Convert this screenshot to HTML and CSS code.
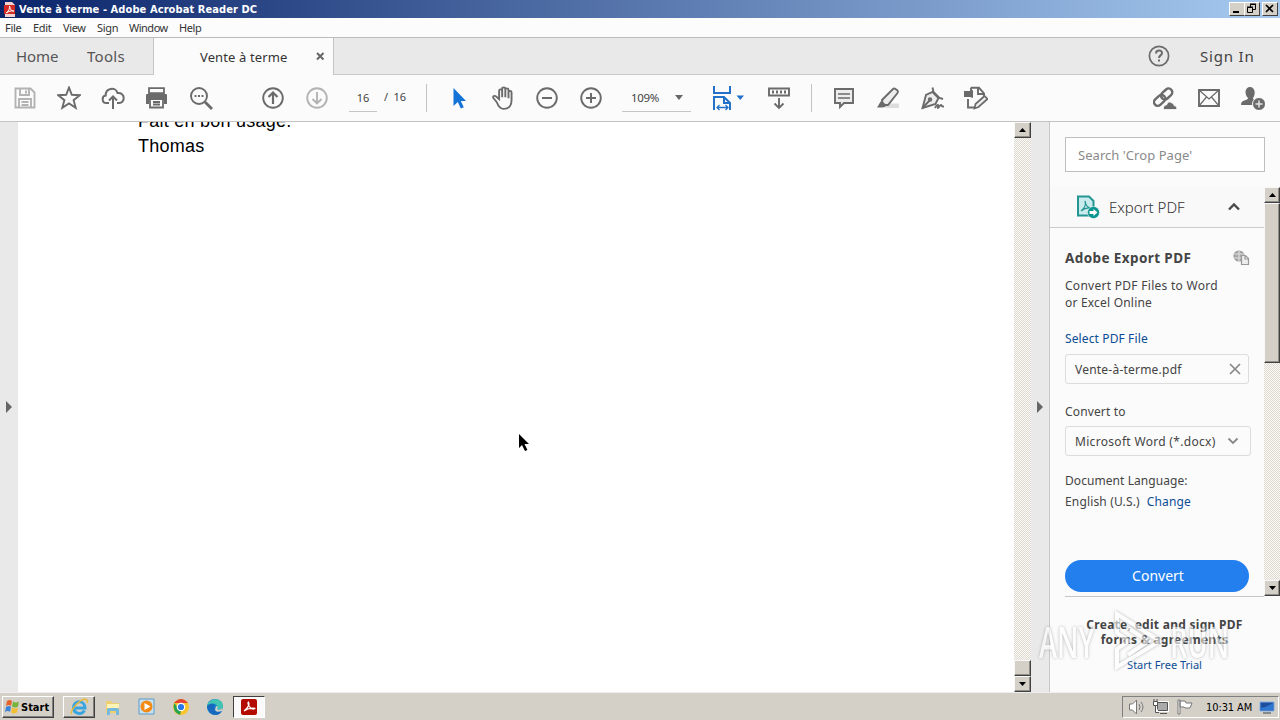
FILE: index.html
```html
<!DOCTYPE html>
<html lang="en">
<head>
<meta charset="utf-8">
<title>Vente à terme - Adobe Acrobat Reader DC</title>
<link rel="stylesheet" href="styles.css">
</head>
<body>
<div class="app">
  <header class="titlebar">
    <svg class="app-icon" width="12" height="15" viewBox="0 0 12 15"><path d="M1 0h7l3 3v12H1z" fill="#f5d3d0"/><path d="M0 3h11v9H0z" fill="#d32b24"/><path d="M2 11c3-2 4-5 3.500-7c1 4 2 5 4.500 5c-3-.5-5 .2-8 2z" fill="none" stroke="#fff"/></svg>
    <span class="title-text">Vente à terme - Adobe Acrobat Reader DC</span>
    <div class="win-buttons">
      <i class="win-btn"><svg width="16" height="13"><path d="M4 9h6v2H4z"/></svg></i>
      <i class="win-btn"><svg width="16" height="13" fill="none" stroke="#000"><path d="M6.500 5V2.500h5v5H9M6 2h6M3.500 5.500h5v5h-5zM3 5h6"/></svg></i>
      <i class="win-btn close"><svg width="16" height="13"><path d="M4 3l7 7M11 3l-7 7" stroke="#000" stroke-width="1.700"/></svg></i>
    </div>
  </header>
  <nav class="menubar"><span class="m1">File</span><span class="m2">Edit</span><span class="m3">View</span><span class="m4">Sign</span><span class="m5">Window</span><span class="m6">Help</span></nav>
  <div class="tabs">
    <div class="tab-left"><span class="home">Home</span><span class="tools">Tools</span></div>
    <div class="tab-active"><span class="doc-name">Vente à terme</span><svg width="9" height="9"><path d="M1 1l6.500 6.500M7.500 1L1 7.500" stroke="#666" stroke-width="2"/></svg></div>
    <div class="tab-right">
      <svg width="22" height="22" viewBox="0 0 22 22" fill="none" stroke="#6b6b6b" stroke-width="1.700"><circle cx="11" cy="11" r="9.600"/><path d="M8 8.500c0-4 6-4 6-.5c0 2.500-3 2.300-3 5M11 14.500v2" stroke-width="2"/></svg>
      <span class="signin">Sign In</span>
    </div>
  </div>
  <div class="toolbar">
    <div class="group g-file">
      <svg class="ic pale" viewBox="0 0 24 24"><path d="M2.500 2.500h15l4 4v15h-19zM7 3v6h9V3M13 4.500v3M6 21v-8h12v8M8.500 16h7M8.500 19h7"/></svg>
      <svg class="ic" viewBox="0 0 24 24"><path d="M12 1.500l2.800 7.300 8 .4-6.200 5 2.100 7.600-6.700-4.300-6.700 4.300 2.100-7.600-6.200-5 8-.4z"/></svg>
      <svg class="ic" viewBox="0 0 24 24"><path d="M8 17H5.500c-5 0-5-7-.8-7.500C4.500 1.500 15 .8 16.500 7c8-1 8 10 1.500 10h-2M12 23V11M8 14.500l4-4 4 4" stroke-width="2"/></svg>
      <svg class="ic solid" viewBox="0 0 24 24"><path d="M4 2.200h15v5H4z" class="hollow"/><path d="M2 8h19q1 0 1 1v9h-3v-4H4v4H1V9q0-1 1-1z"/><path d="M5 13h13v8.500H5z" class="hollow"/><path d="M8 16h7M8 18.500h7" stroke="#6b6b6b"/></svg>
      <svg class="ic" viewBox="0 0 24 24"><circle cx="10" cy="10" r="8"/><path d="M16 16l7 7" stroke-width="2.800"/><path d="M5.500 10h2M9 10h2M12.500 10h2" stroke-width="2"/></svg>
    </div>
    <div class="group g-nav">
      <svg class="ic" viewBox="0 0 24 24"><circle cx="12" cy="12" r="9.800"/><path d="M12 18V7M7.500 11L12 6.500l4.500 4.500" stroke-width="2.200"/></svg>
      <svg class="ic pale" viewBox="0 0 24 24"><circle cx="12" cy="12" r="9.800"/><path d="M12 6v11M7.500 13l4.500 4.500 4.500-4.500"/></svg>
    </div>
    <div class="page-now">16</div><div class="page-all">/&nbsp; 16</div>
    <i class="rule"></i>
    <div class="group g-view">
      <svg class="ic" viewBox="0 0 24 24"><path d="M6.500 2v18l4.300-4 3 6.500 3-1.300-3-6.200H19z" fill="#1473d6" stroke="none"/></svg>
      <svg class="ic" viewBox="0 0 24 24"><path d="M5 16l-3-4c-1-2 1-3 2.500-1.500L7 13V5c0-2 2.700-2 2.700 0v6V3c0-2 2.800-2 2.800 0v8V4c0-2 2.800-2 2.800 0v8V6.500c0-2 2.700-2 2.700 0V14c0 5-2 8.500-7 8.500-3 0-4.500-2-6-6.500" transform="translate(.2 -.2) scale(1.130 1.030)" stroke-width="1.700"/></svg>
      <svg class="ic" viewBox="0 0 24 24"><circle cx="12" cy="12" r="9.800"/><path d="M7 12h10" stroke-width="2"/></svg>
      <svg class="ic" viewBox="0 0 24 24"><circle cx="12" cy="12" r="9.800"/><path d="M7 12h10M12 7v10" stroke-width="2"/></svg>
    </div>
    <div class="zoom-box"><span>109%</span><svg width="8" height="5"><path d="M0 0h8L4 5z" fill="#666"/></svg></div>
    <svg class="fit" width="32" height="26" viewBox="0 0 32 26" fill="none" stroke="#2471c8" stroke-width="2"><path d="M2 1v7h16V1M2 25V12h10l6 6v7M12 12v6h6"/><path d="M5 22.500h11M7.500 20L5 22.500 7.500 25M13.500 20l2.500 2.500-2.500 2.500" stroke-width="1.300"/><path d="M24.500 10.500h7.500l-3.700 4.500z" fill="#2471c8" stroke="none"/></svg>
    <svg class="ic scroll-ic" viewBox="0 0 24 24"><path d="M2 2.500h20v7H2z"/><path d="M5 6h14" stroke-width="3" stroke-dasharray="2 2"/><path d="M12 12v10M7.500 17.500L12 22l4.500-4.500"/></svg>
    <i class="rule rule-2"></i>
    <div class="group g-mark">
      <svg class="ic" viewBox="0 0 24 24"><path d="M3 3h18v14h-9l-4 4v-4H3z" fill="#ededed"/><path d="M6 8h12M6 12h12" stroke-width="1.300"/></svg>
      <svg class="ic" viewBox="0 0 24 24"><path d="M12 17.500h11V22H9z" fill="#ddd" stroke="none"/><path d="M6 14L16.500 3.500q1.500-1.500 3-.5l2 1.500q1 1 0 2.500L12 19H7z" fill="#ededed"/><path d="M5 15l6 4-2 2-3 .5H1z" fill="#6b6b6b" stroke="none"/></svg>
      <svg class="ic" viewBox="0 0 24 24"><path d="M12.500 6l6 6-3 6L2.500 22l3.500-13z" fill="#ededed"/><path d="M12.500 1.500l1 4.500 6 6 3.500 1M2.500 22l7.500-8"/><circle cx="10" cy="13.500" r="1.300"/><path d="M15 22c2-4 4-4 3-1s2-2 3-2 0 2 3 1.500"/></svg>
      <svg class="ic" viewBox="0 0 24 24"><path d="M7 1.800h8l5 5.500M14 2v6h6M4 13v8.500h6M7 1.500v4M20 7v3"/><path d="M0 5h6l3-1v8l-3-1H0z" fill="#6b6b6b" stroke="none"/><path d="M10.500 22.500l1-4.500 9-8 3 3-9 8z" fill="#ededed" stroke-width="1.700"/></svg>
    </div>
    <div class="group g-share">
      <svg class="ic" viewBox="0 0 24 24"><g transform="rotate(-42 10 11)"><rect x="-1" y="7.500" width="12.500" height="7.500" rx="3.700" stroke-width="2.400"/><rect x="8.500" y="7.500" width="12.500" height="7.500" rx="3.700" stroke-width="2.400"/></g><path d="M10.500 23.500q-.5-4.500 3-4.500 1.500-5 5.500-2 2 0 2 2.500 3 0 3 4z" fill="#6b6b6b" stroke="#fbfbfb" stroke-width=".8"/></svg>
      <svg class="ic" viewBox="0 0 24 24"><path d="M2 4h20v16H2z"/><path d="M2 4l10 9L22 4M2 20l7.500-9M22 20l-7.500-9" stroke-width="1.200"/></svg>
      <svg class="ic" viewBox="0 0 24 24"><path d="M0 19c0-6 7-4 7-7-4-4-3-11 2-11s6 7 3 11c0 2 2 2 4 3v4z" fill="#6b6b6b" stroke="none"/><circle cx="18" cy="18" r="6.500" fill="#6b6b6b" stroke="#fbfbfb" stroke-width="1"/><path d="M14.500 18h7M18 14.500v7" stroke="#e6e6e6" stroke-width="1.500"/></svg>
    </div>
  </div>

  <main class="workspace">
    <aside class="strip"><svg width="6" height="12"><path d="M0 0l6 6-6 6z" fill="#666"/></svg></aside>
    <section class="page">
      <p class="line cut">Fait en bon usage.</p>
      <p class="line">Thomas</p>
      <svg class="cursor" width="10" height="17" viewBox="0 0 10 17"><path d="M0 0v14l3-3 3 6 2.500-1-3-6H10z"/></svg>
    </section>
    <div class="scrollbar doc-scroll">
      <i class="sb-btn"><svg width="7" height="4"><path d="M0 4h7L3.500 0z"/></svg></i>
      <i class="sb-track"></i>
      <i class="sb-btn"></i>
      <i class="sb-btn"><svg width="7" height="4"><path d="M0 0h7L3.500 4z"/></svg></i>
    </div>
    <aside class="strip strip-r"><svg width="6" height="12"><path d="M0 0l6 6-6 6z" fill="#666"/></svg></aside>
    <aside class="panel">
      <div class="search"><span>Search 'Crop Page'</span></div>
      <div class="panel-scroll">
        <div class="panel-body">
          <div class="section-head">
            <svg width="24" height="24" viewBox="0 0 24 24"><path d="M2 1.500h11l4.500 4.500v14.500H2z" fill="#c9ebed" stroke="#259591" stroke-width="2"/><path d="M5 16c4-3 5-7 4-10 1 5 3 7 6 7-3-.5-7 .5-10 3z" fill="none" stroke="#259591" stroke-width="1.200"/><circle cx="17.500" cy="17.500" r="6" fill="#0c9490" stroke="#fff" stroke-width=".5"/><path d="M13.500 16h4v-2l4 3.500-4 3.500v-2h-4z" fill="#fff"/></svg>
            <span class="section-title">Export PDF</span>
            <svg class="chev" width="14" height="9"><path d="M2 7.500l5-5 5 5" fill="none" stroke="#4b4b4b" stroke-width="2.400"/></svg>
          </div>
          <div class="export">
            <div class="row head"><strong>Adobe Export PDF</strong><svg width="17" height="16" viewBox="0 0 17 16" fill="#eee" stroke="#999" stroke-width="1.200"><circle cx="6" cy="6" r="5" fill="#aaa"/><path d="M1 4h10M1 8h10M6 1v10" stroke="#ddd"/><path d="M8.500 5.500h4l3 3v6h-7zM12 6v3h3"/></svg></div>
            <p class="desc"><span class="d1">Convert PDF Files to Word</span><br><span class="d2">or Excel Online</span></p>
            <a class="link select">Select PDF File</a>
            <div class="field file"><span>Vente-à-terme.pdf</span><svg width="12" height="12"><path d="M1 1l10 10M11 1L1 11" stroke="#888" stroke-width="1.700"/></svg></div>
            <label class="conv-label">Convert to</label>
            <div class="field combo"><span>Microsoft Word (*.docx)</span><svg width="12" height="8"><path d="M1.500 1.500L6 6l4.500-4.500" fill="none" stroke="#888" stroke-width="1.800"/></svg></div>
            <p class="lang">Document Language:</p>
            <p class="lang2"><span>English (U.S.)</span><a class="link change">Change</a></p>
            <button class="convert"><span>Convert</span></button>
          </div>
        </div>
        <div class="scrollbar panel-sb">
          <i class="sb-btn"><svg width="7" height="4"><path d="M0 4h7L3.500 0z"/></svg></i>
          <i class="sb-btn thumb"></i>
          <i class="sb-track"></i>
          <i class="sb-btn"><svg width="7" height="4"><path d="M0 0h7L3.500 4z"/></svg></i>
        </div>
      </div>
      <div class="promo"><strong><span class="p1">Create, edit and sign PDF</span><br><span class="p2">forms &amp; agreements</span></strong><a class="link trial">Start Free Trial</a></div>
    </aside>
  </main>

  <footer class="taskbar">
    <div class="start"><svg width="16" height="16" viewBox="0 0 16 16"><path d="M2 2q3-2 5 0L6 7Q4 5 1 7z" fill="#e8622b"/><path d="M8 2.500q3 2 6 0l-1 5q-3 2-6 0z" fill="#78b43b"/><path d="M1 8q3-2 5 0l-1 5q-2-2-5 0z" fill="#3c86d8"/><path d="M7 8.500q3 2 6 0l-1 5q-3 2-6 0z" fill="#f5bf35"/></svg><b>Start</b></div>
    <div class="task ie"><svg width="20" height="20" viewBox="0 0 20 20" fill="none"><path d="M15.500 13.500C12 19 4 16 4.500 10 5 3 16 3 16 11H6" stroke="#39a5e0" stroke-width="3"/><path d="M3 17C-1 15 13-1 18 3q1 1 0 3" stroke="#e8b93a" stroke-width="1.400"/></svg></div>
    <div class="task"><svg width="18" height="18" viewBox="0 0 18 18"><path d="M2 3h5l1 2h7v10H2z" fill="#edcf70"/><path d="M3 6h12v4H3z" fill="#fff3b5"/><path d="M3 17v-5q0-2 2-2h8q2 0 2 2v5h-3v-4H6v4z" fill="#75b9dc"/></svg></div>
    <div class="task"><svg width="18" height="18" viewBox="0 0 18 18"><path d="M1 1h15v15H1z" fill="#c8e1f3" stroke="#5b9bc6"/><circle cx="8.500" cy="8.500" r="6" fill="#f28a14"/><path d="M6.500 5l6 3.500-6 3.500z" fill="#fff"/></svg></div>
    <div class="task"><svg width="18" height="18" viewBox="0 0 18 18"><circle cx="9" cy="9" r="8" fill="#f9c52c"/><path d="M2 5l7 8-1 4q-8-3-6-12z" fill="#2ba24c"/><path d="M2 5q7-8 14 0H9z" fill="#e64434"/><circle cx="9" cy="9" r="3.700" fill="#2877e6" stroke="#fff" stroke-width="1.200"/></svg></div>
    <div class="task"><svg width="18" height="18" viewBox="0 0 18 18"><circle cx="9" cy="9" r="8" fill="#167fd0"/><path d="M1 8C3-1 17-1 17 8c0 4-5 4-6 3 2-5-5-8-10-3z" fill="#43c4b2"/><path d="M1 8c4-4 8-2 8 1-2 4 3 6 7 4-4 7-14 4-15-5z" fill="#1769bd"/><path d="M10 8q3 1 1 3 2 2 6-1l-1 3q-6 2-7-1z" fill="#d4d0c8"/></svg></div>
    <div class="task acro"><svg width="16" height="16" viewBox="0 0 16 16"><rect width="16" height="16" rx="2" fill="#b30b00"/><path d="M3 12c4-3 6-7 4.500-9C6 4 9 11 13 10s-5-2-10 2z" fill="none" stroke="#fff" stroke-width="1.200"/></svg></div>
    <div class="tray">
      <svg width="18" height="16" viewBox="0 0 18 16" fill="#fff" stroke="#777"><path d="M1.500 5h3l4-4v14l-4-4h-3z"/><path d="M11 5q2 3 0 6M13 3q4 5 0 10" fill="none"/></svg>
      <svg width="18" height="16" viewBox="0 0 18 16" fill="#fff" stroke="#555"><path d="M5.500 3.500h10v8h-10z" fill="none" stroke="#fff" stroke-width="3"/><path d="M5.500 3.500h10v8h-10z" fill="#aaa"/><path d="M8 14.500h7M1.500 2.500h4v4h-4zM3.500 6.500v7H7M2 0v3M5 0v3"/></svg>
      <svg width="18" height="16" viewBox="0 0 18 16" fill="#fff" stroke="#777"><path d="M2 1h2v14H2zM4 2h5l1 2h6l-2 5H9L8 8H4z"/></svg>
      <time>10:31 AM</time>
      <svg class="desk" width="16" height="13"><path d="M1 1h14v9H1z" fill="#1d4d9c" stroke="#80b1ea"/><path d="M1 7q7-1 13-5v7H1z" fill="#2f78cf"/><path d="M4 12h8" stroke="#345"/></svg>
    </div>
  </footer>
  <div class="watermark"><span>ANY</span><svg width="58" height="62" viewBox="0 0 58 62"><path d="M10 4l43 27-43 26V39l12-8-12-8zM21 18l20 13-20 14" fill="none" stroke="#fff" stroke-width="4"/></svg><span class="w2">RUN</span></div>
</div>
</body>
</html>
```
FILE: styles.css
```css
* { box-sizing: border-box; }
body { margin: 0; background: #fff; color: #444; font-family: "Noto Sans", "Open Sans", sans-serif; }
p { margin: 0; }
svg { display: block; flex: none; }
span, strong, time, b { white-space: nowrap; }
.app { position: relative; display: flex; flex-direction: column; width: 1280px; height: 720px; overflow: hidden; }

.titlebar { display: flex; align-items: center; height: 18px; flex: none; padding: 0 2px 0 4px; background: linear-gradient(90deg, #0a246a, #a6caf0); }
.title-text { margin-left: 3px; color: #fff; font: bold 11px "DejaVu Sans Condensed", "DejaVu Sans", sans-serif; font-stretch: condensed; letter-spacing: .09px; }
.win-buttons { display: flex; margin-left: auto; }
.win-btn { display: block; width: 16px; height: 14px; background: #d4d0c8; border: 1px solid; border-color: #fff #404040 #404040 #fff; }
.win-btn svg { margin: -1px; }
.win-btn:first-child { margin-right: -1px; }
.close { margin-left: 2px; }

.menubar { display: flex; height: 20px; flex: none; padding-left: 5px; background: #fcfcfc; border-bottom: 1px solid #bcbcbc; font-size: 11px; line-height: 20px; color: #333; }
.m1 { width: 28px; letter-spacing: -.3px; } .m2 { width: 30px; letter-spacing: -.3px; } .m3 { width: 34px; letter-spacing: -.4px; } .m4 { width: 32px; letter-spacing: -.3px; } .m5 { width: 50px; letter-spacing: -.5px; } .m6 { letter-spacing: -.4px; }

.tabs { display: flex; height: 37px; flex: none; background: #e9e9e9; line-height: 36px; }
.tab-left { width: 154px; padding-left: 16px; display: flex; border-right: 1px solid #c4c4c4; border-bottom: 1px solid #c9c9c9; font-size: 15px; color: #555; }
.home { width: 71px; letter-spacing: -.1px; }
.tools { letter-spacing: .3px; }
.tab-active { display: flex; align-items: center; width: 179px; padding-left: 46px; background: #fbfbfb; font-size: 13px; color: #333; }
.doc-name { width: 116px; padding-top: 1px; letter-spacing: .12px; }
.tab-right { flex: 1; display: flex; align-items: center; justify-content: flex-end; padding-right: 25px; border-left: 1px solid #c4c4c4; border-bottom: 1px solid #c9c9c9; }
.signin { width: 55px; margin-left: 30px; font-size: 15px; color: #444; letter-spacing: .8px; }

.toolbar { display: flex; align-items: center; height: 47px; flex: none; padding: 0 5px 0 3px; background: #fbfbfb; border-bottom: 1px solid #c3c3c3; font-size: 12px; color: #444; }
.group { display: flex; }
.ic { width: 24px; height: 24px; margin: 0 10px; fill: none; stroke: #6b6b6b; stroke-width: 1.900; }
.pale { stroke: #b3b3b3; }
.solid { fill: #6b6b6b; stroke: none; }
.hollow { fill: #fbfbfb; stroke: #6b6b6b; stroke-width: 1.800; }
.g-nav { margin-left: 28px; }
.page-now { width: 28px; height: 28px; margin-left: 10px; border-bottom: 1px solid #c6c6c6; text-align: center; line-height: 27px; font-size: 11px; }
.page-all { width: 24px; margin-left: 7px; font-size: 11px; line-height: 26px; height: 28px; letter-spacing: -.1px; }
.rule { width: 1px; height: 28px; background: #c2c2c2; margin: 0 10px 0 18px; }
.zoom-box { display: flex; align-items: center; justify-content: space-between; width: 69px; height: 28px; margin-left: 9px; padding: 0 12px 0 9px; border-bottom: 1px solid #c6c6c6; font-size: 11.500px; letter-spacing: -.3px; }
.zoom-box svg { margin-right: -4px; }
.fit { margin-left: 21px; }
.scroll-ic { margin: 0 0 0 23px; }
.rule-2 { margin-left: 20px; }
.g-share { margin-left: auto; }

.workspace { display: flex; height: 570px; flex: none; }
.strip { width: 18px; background: #e9e9e9; padding: 279px 0 0 6px; }
.page { position: relative; width: 996px; background: #fff; padding-left: 120px; overflow: hidden; }
.line { font: 18px/25px "Liberation Sans", Arial, sans-serif; color: #000; letter-spacing: .25px; }
.cut { margin-top: -13px; }
.cursor { position: absolute; left: 501px; top: 312px; }
.scrollbar { display: flex; flex-direction: column; width: 17px; }
.sb-track { flex: 1; background: repeating-conic-gradient(#dcd9d0 0 25%, #fbfaf7 0 50%) 0 0 / 2px 2px; }
.sb-btn { display: grid; place-items: center; height: 16px; flex: none; background: #d4d0c8; border: 1px solid; border-color: #f8f8f8 #404040 #404040 #f8f8f8; box-shadow: inset -1px -1px #918e87; }
.strip-r { width: 19px; border-right: 1px solid #c8c8c8; }
.panel { display: flex; flex-direction: column; width: 230px; background: #fbfbfb; font-size: 12px; }
.search { width: 200px; height: 35px; flex: none; margin: 15px 0 15px 15px; padding-left: 12px; border: 1px solid #bfbfbf; background: #fff; color: #8a8a8a; font-size: 13px; line-height: 35px; letter-spacing: .05px; }
.panel-scroll { display: flex; height: 409px; flex: none; }
.panel-body { width: 214px; }
.panel-sb { width: 16px; }
.thumb { height: 160px; }
.section-head { display: flex; align-items: center; height: 41px; padding: 0 24px 0 26px; border-bottom: 1px solid #ccc; background: #f9f9f9; }
.section-title { margin-left: 9px; font-size: 15px; font-weight: 300; color: #333; }
.chev { margin-left: auto; margin-right: -1px; margin-top: -2px; }
.export { display: flex; flex-direction: column; height: 369px; margin-left: 15px; border-bottom: 1px solid #c6c6c6; font-size: 12px; }
.row { display: flex; justify-content: space-between; }
.head { height: 49px; padding: 21px 14px 0 0; font-size: 13.500px; line-height: 19px; letter-spacing: .4px; }
.head svg { margin-top: 1px; }
.desc { height: 53px; line-height: 17px; }
.d1 { letter-spacing: .28px; }
.d2 { letter-spacing: .2px; }
.link { color: #0b4d94; }
.select { height: 24px; line-height: 18px; letter-spacing: .12px; }
.field { display: flex; align-items: center; justify-content: space-between; height: 30px; flex: none; width: 184px; padding: 0 7px 0 9px; border: 1px solid #dcdcdc; border-radius: 3px; }
.file { letter-spacing: .22px; }
.conv-label { height: 42px; padding-top: 19px; line-height: 18px; letter-spacing: .15px; }
.combo { width: 186px; padding-right: 11px; letter-spacing: .31px; }
.combo span { padding-top: 1px; }
.lang { margin-top: 16px; line-height: 18px; letter-spacing: .07px; }
.lang2 { margin-top: 3px; display: flex; line-height: 18px; letter-spacing: .15px; }
.change { margin-left: 7px; }
.convert { width: 184px; height: 32px; margin: auto 0 4px; padding: 0 0 2px 2px; border: 0; border-radius: 16px; background: #237fee; color: #fff; font: 14px "Noto Sans", sans-serif; }
.promo { display: flex; flex-direction: column; align-items: center; padding: 21px 1px 0 0; font-size: 12px; line-height: 15px; text-align: center; letter-spacing: .28px; }
.trial { margin-top: 9px; font-size: 11px; line-height: 18px; letter-spacing: 0; }

.taskbar { display: flex; align-items: center; height: 28px; flex: none; background: #d4d0c8; border-top: 1px solid #eee; padding: 1px 0 0 2px; font-family: "DejaVu Sans Condensed", "DejaVu Sans", sans-serif; color: #000; }
.start { display: flex; align-items: center; width: 52px; height: 22px; padding-left: 2px; border: 1px solid; border-color: #fff #404040 #404040 #fff; box-shadow: inset -1px -1px #808080; font-size: 11px; font-stretch: condensed; }
.task { display: grid; place-items: center; width: 32px; height: 22px; margin-right: 2px; }
.ie { margin-left: 9px; border: 1px solid; border-color: #fff #404040 #404040 #fff; box-shadow: inset -1px -1px #808080; }
.acro { background: #fafafa; border: 1px solid; border-color: #404040 #fff #fff #404040; }
.tray { display: flex; align-items: center; width: 157px; height: 22px; margin: 0 1px 0 auto; padding-left: 5px; border: 1px solid; border-color: #808080 #fff #fff #808080; }
.tray svg + svg { margin-left: 6px; }
.tray time { margin-left: 12px; font-size: 11px; font-stretch: condensed; letter-spacing: -.1px; }
.tray .desk { margin-left: 7px; }
.watermark { position: absolute; left: 1039px; top: 610px; display: flex; align-items: center; height: 62px; opacity: .6; color: #fff; filter: drop-shadow(0 0 1.500px #888); font: 600 44px "Open Sans", sans-serif; }
.watermark span { display: block; width: 64px; transform: scaleX(.62); transform-origin: left; }
.watermark svg { margin-left: 4px; }
.watermark .w2 { margin-left: 5px; }
```
